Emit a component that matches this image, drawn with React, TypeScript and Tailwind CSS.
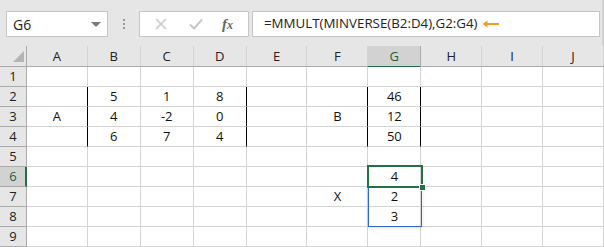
import React from 'react'

const cols = ['A', 'B', 'C', 'D', 'E', 'F', 'G', 'H', 'I', 'J']
const colW: Record<string, string> = {
  A: 'w-[61px]', B: 'w-[53px]', C: 'w-[53px]', D: 'w-[53px]', E: 'w-[61px]',
  F: 'w-[61px]', G: 'w-[53px]', H: 'w-[61px]', I: 'w-[61px]', J: 'w-[61px]',
}

// cell values keyed by "col+row"
const values: Record<string, string> = {
  B2: '5', C2: '1', D2: '8', G2: '46',
  A3: 'A', B3: '4', C3: '-2', D3: '0', F3: 'B', G3: '12',
  B4: '6', C4: '7', D4: '4', G4: '50',
  G6: '4', F7: 'X', G7: '2', G8: '3',
}

// cells whose right edge is drawn as the black border of a matrix
const blackRight = new Set(['A2', 'A3', 'A4', 'D2', 'D3', 'D4', 'F2', 'F3', 'F4', 'G2', 'G3', 'G4'])

const font = { fontFamily: '"Open Sans", "Noto Sans", sans-serif' }

function FormulaBar() {
  return (
    <div className="h-[46px] bg-[#e6e6e6] flex items-start pt-[11px] pl-[6px] pr-[2px] border-r-2 border-[#d4d4d4]">
      <div className="w-[102px] h-[26px] bg-white border border-[#c6c6c6] flex items-center justify-between pl-[6px] pr-[6px] text-[14px] text-[#222]">
        <span>G6</span>
        <span className="w-0 h-0 border-l-[5px] border-r-[5px] border-t-[5px] border-l-transparent border-r-transparent border-t-[#7a7a7a]" />
      </div>
      <div className="w-[31px] h-[26px] flex flex-col items-center justify-center gap-[2px]">
        <span className="w-[2px] h-[2px] bg-[#9a9a9a]" />
        <span className="w-[2px] h-[2px] bg-[#9a9a9a]" />
        <span className="w-[2px] h-[2px] bg-[#9a9a9a]" />
      </div>
      <div className="w-[110px] h-[26px] bg-white border border-[#c6c6c6] flex items-center">
        <svg width="12" height="12" viewBox="0 0 12 12" className="ml-[15px]">
          <path d="M1 1 L11 11 M11 1 L1 11" stroke="#c8c8c8" strokeWidth="1.6" />
        </svg>
        <svg width="14" height="12" viewBox="0 0 14 12" className="ml-[22px]">
          <path d="M1 6.5 L5 10.5 L13 1.5" stroke="#c8c8c8" strokeWidth="2" fill="none" />
        </svg>
        <span className="ml-[19px] text-[15px] italic font-bold text-[#666]" style={{ fontFamily: '"Liberation Serif", serif' }}>
          f<span className="text-[12px]">x</span>
        </span>
      </div>
      <div className="ml-[3px] flex-1 h-[26px] bg-white border border-[#c6c6c6] flex items-center pl-[11px] text-[13.3px] text-[#222]">
        <span>=MMULT(MINVERSE(B2:D4),G2:G4)</span>
        <svg width="18" height="8" viewBox="0 0 18 8" className="ml-[5px]">
          <path d="M2 4 H17" stroke="#f59a23" strokeWidth="2" />
          <path d="M0.5 4 L5.5 0.5 L5.5 7.5 Z" fill="#f59a23" />
        </svg>
      </div>
    </div>
  )
}

function HeaderRow() {
  return (
    <div className="flex h-[21px] bg-[#e6e6e6] border-b border-[#ababab]">
      <div className="w-[27px] h-full border-r border-[#ababab] relative">
        <svg width="11" height="11" viewBox="0 0 11 11" className="absolute left-[13px] top-[5px]">
          <path d="M11 0 L11 11 L0 11 Z" fill="#b4b4b4" />
        </svg>
      </div>
      {cols.map((c) => (
        <div
          key={c}
          className={
            c === 'G'
              ? `${colW[c]} h-[22px] -mb-[1px] bg-[#d2d2d2] border-r border-[#ababab] border-b-2 border-b-[#217346] text-[#1e5e3a] flex items-center justify-center pt-[2px]`
              : `${colW[c]} h-full border-r border-[#d4d4d4] text-[#222] flex items-center justify-center pt-[2px]`
          }
        >
          {c}
        </div>
      ))}
    </div>
  )
}

function Row({ r }: { r: number }) {
  const active = r === 6
  return (
    <div className="flex h-[20px]">
      <div
        className={
          active
            ? 'w-[27px] h-full bg-[#d2d2d2] border-b border-[#ababab] border-r-2 border-r-[#217346] text-[#1e5e3a] flex items-end justify-center pl-[1px]'
            : 'w-[27px] h-full bg-[#e6e6e6] border-b border-[#ababab] border-r border-r-[#ababab] text-[#222] flex items-end justify-center'
        }
      >
        {r}
      </div>
      {cols.map((c) => {
        const id = `${c}${r}`
        return (
          <div
            key={c}
            className={`${colW[c]} h-full bg-white border-b border-[#d4d4d4] border-r ${
              blackRight.has(id) ? 'border-r-black' : 'border-r-[#d4d4d4]'
            } flex items-end justify-center text-[#111] leading-[19px]`}
          >
            {values[id] ?? ''}
          </div>
        )
      })}
    </div>
  )
}

export default function App() {
  return (
    <div className="w-[604px] h-[247px] overflow-hidden bg-white text-[13px]" style={font}>
      <FormulaBar />
      <div className="relative">
        <HeaderRow />
        {[1, 2, 3, 4, 5, 6, 7, 8, 9].map((r) => (
          <Row key={r} r={r} />
        ))}
        {/* selected range G6:G8 */}
        <div className="absolute left-[368px] top-[141px] w-[54px] h-[40px] border border-[#2f66d0] pointer-events-none shadow-[0_1px_4px_rgba(0,0,0,0.12)]" />
        {/* active cell */}
        <div className="absolute left-[367px] top-[119px] w-[56px] h-[23px] border-2 border-[#217346] pointer-events-none" />
        <div className="absolute left-[419px] top-[138px] w-[7px] h-[7px] bg-[#217346] border border-white" />
      </div>
    </div>
  )
}
